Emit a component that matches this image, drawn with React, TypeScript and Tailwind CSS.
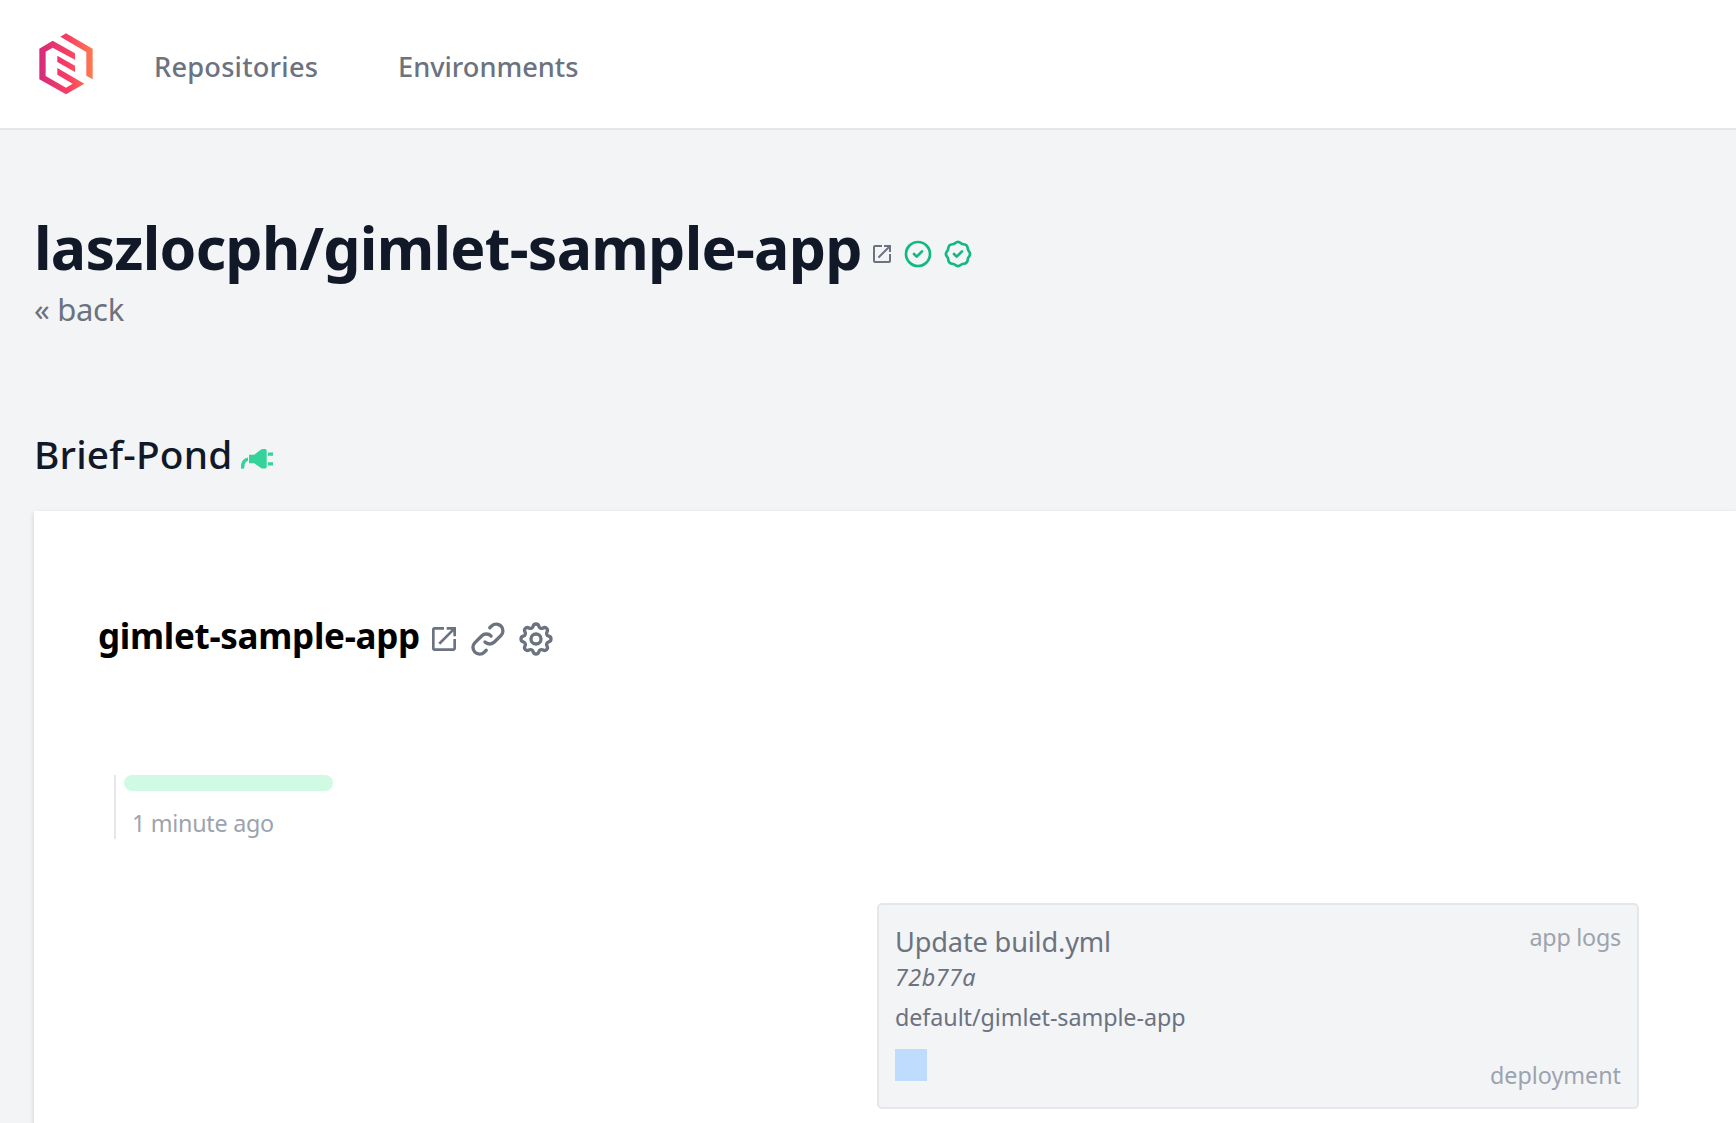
import type { ReactNode } from "react";

function ExternalIcon({ className }: { className: string }) {
  return (
    <svg className={className} viewBox="0 0 24 24" fill="currentColor">
      <path d="M19 19H5V5h7V3H5a2 2 0 00-2 2v14a2 2 0 002 2h14c1.1 0 2-.9 2-2v-7h-2v7zM14 3v2h3.59l-9.83 9.83 1.41 1.41L19 6.41V10h2V3h-7z" />
    </svg>
  );
}

function OutlineIcon({ className, children }: { className: string; children: ReactNode }) {
  return (
    <svg
      className={className}
      viewBox="0 0 24 24"
      fill="none"
      stroke="currentColor"
      strokeWidth={2}
      strokeLinecap="round"
      strokeLinejoin="round"
    >
      {children}
    </svg>
  );
}

function Logo() {
  return (
    <svg className="ml-[39px] mt-[33px] h-[62px] w-[54px] shrink-0" viewBox="117 99 162 186">
      <defs>
        <linearGradient id="brand" gradientUnits="userSpaceOnUse" x1="118" y1="190" x2="278" y2="190">
          <stop offset="0" stopColor="#d62a7b" />
          <stop offset="0.55" stopColor="#f83f62" />
          <stop offset="1" stopColor="#ff7a50" />
        </linearGradient>
      </defs>
      <g fill="url(#brand)">
        <path d="M158 122L225 160V179L158 143L137 155V228L198 263L218 251L172 224V204L253 251L198 283L118 238V146Z" />
        <path d="M172 167L225 197V216L172 186Z" />
        <path d="M181 110L198 100L278 146V238L259 227V156Z" />
      </g>
    </svg>
  );
}

function PlugIcon() {
  return (
    <svg className="ml-[9px] mt-[18px] h-[22px] w-[34px] shrink-0 text-[#34d399]" viewBox="4 8 34 22" fill="currentColor">
      <path d="M13 14.7h5.2L25 9.6q.8-.6 1.8-.6H29a1.7 1.7 0 011.7 1.7v16.2a1.7 1.7 0 01-1.7 1.7h-2.2q-1 0-1.8-.6l-6.8-4.8H13z" />
      <path d="M32 12.5h5v3.2h-5zM32 22.2h5v3.2h-5z" />
      <path d="M5 28.7v-2.2c0-4.6 2.600-8 7-8.900v3.200c-2.200.8-3.500 2.800-3.500 5.400v.8l-1 1.700z" />
    </svg>
  );
}

function Header() {
  return (
    <header className="flex h-[130px] border-b-2 border-gray-200 bg-white">
      <Logo />
      <nav className="ml-[61px] flex gap-20 pt-[53px] text-[27.2px] leading-7 font-medium text-[#6b7280]">
        <a className="w-[164px] tracking-[0.22px]">Repositories</a>
        <a className="tracking-[0px]">Environments</a>
      </nav>
    </header>
  );
}

function Pod() {
  return (
    <div className="ml-[779px] mt-16 flex h-[206px] w-[762px] justify-between rounded-[5px] border-2 border-[#e5e7eb] bg-[#f3f4f6] px-4 text-[23.3px] leading-8 text-[#6b7280]">
      <div className="pt-[21px]">
        <p className="text-[27.2px] tracking-[-0.17px]">Update build.yml</p>
        <p className="mt-[3px] tracking-[0.5px] italic">72b77a</p>
        <p className="mt-2 tracking-[-0.06px]">default/gimlet-sample-app</p>
        <div className="mt-4 size-8 bg-[#bfdbfe]" />
      </div>
      <div className="flex flex-col justify-between pt-4 pb-4 text-right text-[#9ca3af]">
        <span className="tracking-[-0.24px]">app logs</span>
        <span>deployment</span>
      </div>
    </div>
  );
}

export default function App() {
  return (
    <div className="h-[1123px] w-[1736px] overflow-hidden bg-[#f3f4f6] font-['Noto_Sans',sans-serif]">
      <Header />
      <main className="pt-[81px] pl-[34px]">
        <div className="flex h-[72px]">
          <h1 className="w-[836px] text-[59px] leading-[72px] font-bold tracking-[-0.74px] whitespace-nowrap text-[#111827]">
            laszlocph/gimlet-sample-app
          </h1>
          <div className="flex items-center gap-2 pt-[14px]">
            <ExternalIcon className="size-6 text-[#6b7280]" />
            <OutlineIcon className="size-8 text-[#10b981]">
              <path d="M9 12l2 2 4-4m6 2a9 9 0 11-18 0 9 9 0 0118 0z" />
            </OutlineIcon>
            <OutlineIcon className="size-8 text-[#10b981]">
              <path d="M9 12l2 2 4-4M7.835 4.697a3.42 3.42 0 001.946-.806 3.42 3.42 0 014.438 0 3.42 3.42 0 001.946.806 3.42 3.42 0 013.138 3.138 3.42 3.42 0 00.806 1.946 3.42 3.42 0 010 4.438 3.42 3.42 0 00-.806 1.946 3.42 3.42 0 01-3.138 3.138 3.42 3.42 0 00-1.946.806 3.42 3.42 0 01-4.438 0 3.42 3.42 0 00-1.946-.806 3.42 3.42 0 01-3.138-3.138 3.42 3.42 0 00-.806-1.946 3.42 3.42 0 010-4.438 3.42 3.42 0 00.806-1.946 3.42 3.42 0 013.138-3.138z" />
            </OutlineIcon>
          </div>
        </div>
        <a className="mt-[10px] block text-[31px] leading-8 tracking-[-0.3px] text-[#6b7280]">« back</a>

        <div className="mt-[105px] flex h-12">
          <h2 className="w-[197px] text-[38.8px] leading-[48px] font-medium tracking-[0.18px] whitespace-nowrap text-[#111827]">
            Brief-Pond
          </h2>
          <PlugIcon />
        </div>

        <section className="mt-[33px] h-[700px] bg-white pt-[105px] pl-16 shadow-[0_2px_6px_rgba(0,0,0,0.1),0_2px_4px_rgba(0,0,0,0.06)]">
          <div className="flex h-10">
            <h3 className="w-[330px] text-[35px] leading-10 font-bold tracking-[-0.3px] whitespace-nowrap text-black">
              gimlet-sample-app
            </h3>
            <div className="flex items-center gap-2 pt-[6px] text-[#6b7280]">
              <ExternalIcon className="size-8" />
              <OutlineIcon className="size-10">
                <path d="M13.828 10.172a4 4 0 00-5.656 0l-4 4a4 4 0 105.656 5.656l1.102-1.101m-.758-4.899a4 4 0 005.656 0l4-4a4 4 0 00-5.656-5.656l-1.1 1.1" />
              </OutlineIcon>
              <OutlineIcon className="size-10">
                <path d="M10.325 4.317c.426-1.756 2.924-1.756 3.35 0a1.724 1.724 0 002.573 1.066c1.543-.94 3.31.826 2.37 2.37a1.724 1.724 0 001.065 2.572c1.756.426 1.756 2.924 0 3.35a1.724 1.724 0 00-1.066 2.573c.94 1.543-.826 3.31-2.37 2.37a1.724 1.724 0 00-2.572 1.065c-.426 1.756-2.924 1.756-3.35 0a1.724 1.724 0 00-2.573-1.066c-1.543.94-3.31-.826-2.37-2.37a1.724 1.724 0 00-1.065-2.572c-1.756-.426-1.756-2.924 0-3.35a1.724 1.724 0 001.066-2.573c-.94-1.543.826-3.31 2.37-2.37.996.608 2.296.07 2.572-1.065z" />
                <path d="M15 12a3 3 0 11-6 0 3 3 0 016 0z" />
              </OutlineIcon>
            </div>
          </div>

          <div className="mt-[119px] ml-4 h-16 w-[220px] border-l-2 border-[#e5e7eb] pl-2">
            <div className="h-4 w-[209px] rounded-full bg-[#d1fae5]" />
            <p className="mt-4 ml-2 text-[23.3px] leading-8 tracking-[-0.27px] whitespace-nowrap text-[#9ca3af]">
              1 minute ago
            </p>
          </div>

          <Pod />
        </section>
      </main>
    </div>
  );
}
